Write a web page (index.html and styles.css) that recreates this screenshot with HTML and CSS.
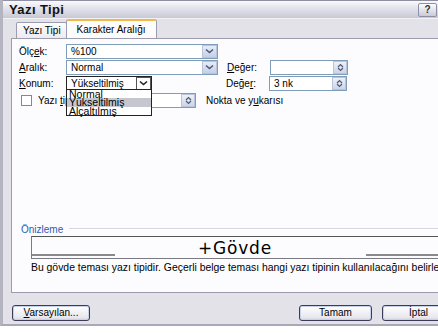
FILE: index.html
```html
<!DOCTYPE html>
<html>
<head>
<meta charset="utf-8">
<link rel="stylesheet" href="styles.css">
</head>
<body>
<div class="window">
  <div class="titlebar">
    <span class="title">Yazı Tipi</span>
    <span class="help">?</span>
  </div>
  <div class="tabs">
    <span class="tab">Yazı Tipi</span>
    <span class="tab active">Karakter Aralığı</span>
  </div>
  <div class="panel">
    <div class="row r1">
      <span class="lbl">Ölç<u>e</u>k:</span>
      <span class="combo wide"><span class="val">%100</span><span class="dd"><svg width="9" height="6" viewBox="0 0 9 6"><path d="M1 1.5 L4.5 4.5 L8 1.5" fill="none" stroke="#4d5a7a" stroke-width="1.6"/></svg></span></span>
    </div>
    <div class="row r2">
      <span class="lbl"><u>A</u>ralık:</span>
      <span class="combo wide"><span class="val">Normal</span><span class="dd"><svg width="9" height="6" viewBox="0 0 9 6"><path d="M1 1.5 L4.5 4.5 L8 1.5" fill="none" stroke="#4d5a7a" stroke-width="1.6"/></svg></span></span>
      <span class="lbl2"><u>D</u>eğer:</span>
      <span class="spin"><span class="val"></span><span class="sb"><svg width="9" height="9" viewBox="0 0 9 9"><path d="M2 4 L4.5 1.5 L7 4 M2 5 L4.5 7.5 L7 5" fill="none" stroke="#4d5a7a" stroke-width="1.2"/></svg></span></span>
    </div>
    <div class="row r3">
      <span class="lbl"><u>K</u>onum:</span>
      <span class="combo narrow open"><span class="val">Yükseltilmiş</span><span class="dd"><svg width="9" height="6" viewBox="0 0 9 6"><path d="M1 1.5 L4.5 4.5 L8 1.5" fill="none" stroke="#222" stroke-width="1.6"/></svg></span></span>
      <span class="lbl2 gap3">Değe<u>r</u>:</span>
      <span class="spin"><span class="val">3 nk</span><span class="sb"><svg width="9" height="9" viewBox="0 0 9 9"><path d="M2 4 L4.5 1.5 L7 4 M2 5 L4.5 7.5 L7 5" fill="none" stroke="#4d5a7a" stroke-width="1.2"/></svg></span></span>
    </div>
    <div class="row r4">
      <span class="check"></span>
      <span class="ctext">Yazı <u>t</u>ipleri</span>
      <span class="spin small"><span class="val"></span><span class="sb"><svg width="9" height="9" viewBox="0 0 9 9"><path d="M2 4 L4.5 1.5 L7 4 M2 5 L4.5 7.5 L7 5" fill="none" stroke="#4d5a7a" stroke-width="1.2"/></svg></span></span>
      <span class="after">Nokta ve y<u>u</u>karısı</span>
    </div>
    <div class="list">
      <div class="item">Normal</div>
      <div class="item sel">Yükseltilmiş</div>
      <div class="item">Alçaltılmış</div>
    </div>
    <div class="spacer"></div>
    <div class="group">
      <span class="glabel">Önizleme</span>
      <span class="gline"></span>
    </div>
    <div class="preview">
      <span class="pl left"></span>
      <span class="ptext">+Gövde</span>
      <span class="pl right"></span>
    </div>
    <div class="desc">Bu gövde teması yazı tipidir. Geçerli belge teması hangi yazı tipinin kullanılacağını belirler.</div>
  </div>
  <div class="buttons">
    <span class="btn def"><u>V</u>arsayılan...</span>
    <span class="grow"></span>
    <span class="btn ok">Tamam</span>
    <span class="btn cancel">İptal</span>
  </div>
</div>
</body>
</html>
```

FILE: styles.css
```css
html, body {
  margin: 0;
  padding: 0;
  background: #ffffff;
  overflow: hidden;
}
body {
  width: 438px;
  height: 333px;
  font-family: "Liberation Sans", Arial, sans-serif;
  font-size: 10px;
  color: #000;
}
.window {
  width: 520px;
  height: 326px;
  background: #e3e2e8;
  border-left: 3px solid #b4b3c0;
  border-bottom: 2px solid #a9a8b6;
  box-sizing: border-box;
  display: flex;
  flex-direction: column;
}
.titlebar {
  height: 18px;
  flex: none;
  display: flex;
  align-items: center;
  padding: 0 83px 0 6px;
  background: linear-gradient(#fbfbfd 0%, #e6e6ee 35%, #c9c9d6 100%);
  border-top: 1px solid #8f8fa3;
  box-sizing: border-box;
}
.title {
  font-weight: bold;
  font-size: 13px;
  flex: 1;
  color: #111;
  letter-spacing: 0.4px;
}
.help {
  width: 19px;
  height: 14px;
  box-sizing: border-box;
  border: 1px solid #8d8fa6;
  border-radius: 2px;
  background: linear-gradient(#fdfdff, #c9cad8);
  font-weight: bold;
  font-size: 10px;
  text-align: center;
  line-height: 12px;
  color: #333;
}
.tabs {
  height: 20px;
  flex: none;
  display: flex;
  align-items: flex-end;
  padding-left: 13px;
  box-sizing: border-box;
  border-top: 1px solid #f2f2f5;
}
.tab {
  height: 15px;
  padding: 0 5px 0 6px;
  border: 1px solid #9c9cae;
  border-bottom: none;
  border-radius: 2px 2px 0 0;
  background: linear-gradient(#fcfcfe, #ebebf0);
  line-height: 15px;
}
.tab.active {
  height: 18px;
  line-height: 17px;
  padding: 0 10px 0 10px;
  background: #fcfcfe;
  border-top: 2px solid #f0b84a;
  margin-left: -1px;
  margin-bottom: -1px;
  position: relative;
}
.panel {
  flex: none;
  height: 255px;
  margin-left: 8px;
  background: #fcfcfe;
  border: 1px solid #9c9cae;
  border-right: none;
  box-sizing: border-box;
  position: relative;
  display: flex;
  flex-direction: column;
  padding: 4px 0 0 7px;
}
.row {
  display: flex;
  align-items: center;
  height: 16px;
}
.lbl {
  width: 47px;
  flex: none;
}
.combo, .spin {
  display: flex;
  height: 15px;
  border: 1px solid #7f9db9;
  box-sizing: border-box;
  background: #fff;
  align-items: center;
  flex: none;
}
.combo.wide { width: 152px; }
.combo.narrow { width: 86px; border-color: #222; }
.val {
  flex: 1;
  padding-left: 4px;
  white-space: nowrap;
  overflow: hidden;
}
.dd {
  width: 15px;
  height: 13px;
  background: linear-gradient(#e6ecf8, #c5d0e6);
  border: 1px solid #b8c4dc;
  box-sizing: border-box;
  display: flex;
  align-items: center;
  justify-content: center;
}
.open .dd {
  background: #fff;
  border-color: #555;
}
.lbl2 {
  width: 43px;
  margin-left: 9px;
  flex: none;
}
.lbl2.gap3 { margin-left: 74px; }
.spin { width: 78px; }
.spin.small { width: 130px; }
.sb {
  width: 14px;
  height: 13px;
  background: linear-gradient(#eef1f8, #cdd5e6);
  border: 1px solid #b8c4dc;
  box-sizing: border-box;
  display: flex;
  align-items: center;
  justify-content: center;
}
.r4 { margin-top: 1px; }
.check {
  width: 11px;
  height: 11px;
  border: 1px solid #7a8aa0;
  box-sizing: border-box;
  background: #fff;
  margin-left: 2px;
  flex: none;
}
.ctext {
  margin-left: 6px;
  width: 28px;
  flex: none;
  white-space: nowrap;
  overflow: hidden;
}
.after { margin-left: 10px; }
.list {
  position: absolute;
  left: 54px;
  top: 50px;
  width: 86px;
  background: #fff;
  border: 1px solid #222;
  box-sizing: border-box;
  line-height: 8.4px;
  font-size: 10.5px;
}
.item { padding-left: 2px; }
.item.sel { background: #c6c6ce; }
.spacer { height: 114px; flex: none; }
.group {
  display: flex;
  align-items: center;
  margin-left: 2px;
  height: 14px;
}
.glabel { color: #2a5ab8; }
.gline {
  flex: 1;
  height: 1px;
  background: #d6d6de;
  border-bottom: 1px solid #fff;
  margin-left: 6px;
}
.preview {
  margin-left: 12px;
  height: 23px;
  border: 1px solid #7a7a84;
  border-top-color: #555;
  box-sizing: border-box;
  display: flex;
  align-items: center;
  position: relative;
}
.ptext {
  font-family: "DejaVu Sans", Verdana, sans-serif;
  font-size: 17px;
  margin-left: 166px;
  letter-spacing: 0.8px;
}
.pl {
  position: absolute;
  height: 2px;
  background: #8a8a8a;
  bottom: 2px;
}
.pl.left { left: 0; width: 83px; }
.pl.right { left: 334px; width: 140px; }
.desc {
  margin-left: 12px;
  margin-top: 3px;
  white-space: nowrap;
  font-size: 10.4px;
}
.buttons {
  flex: 1;
  display: flex;
  align-items: flex-start;
  padding: 12px 0 0 9px;
}
.btn {
  height: 16px;
  box-sizing: border-box;
  border: 1px solid #3c3c5a;
  border-radius: 3px;
  background: linear-gradient(#ffffff, #e8e8ee 80%, #d6d6e0);
  box-shadow: inset 0 0 0 1px #c6d2ea;
  text-align: center;
  line-height: 14px;
}
.def { width: 78px; }
.grow { flex: 1; }
.ok { width: 73px; }
.cancel { width: 73px; margin-left: 10px; margin-right: 65px; }
```
